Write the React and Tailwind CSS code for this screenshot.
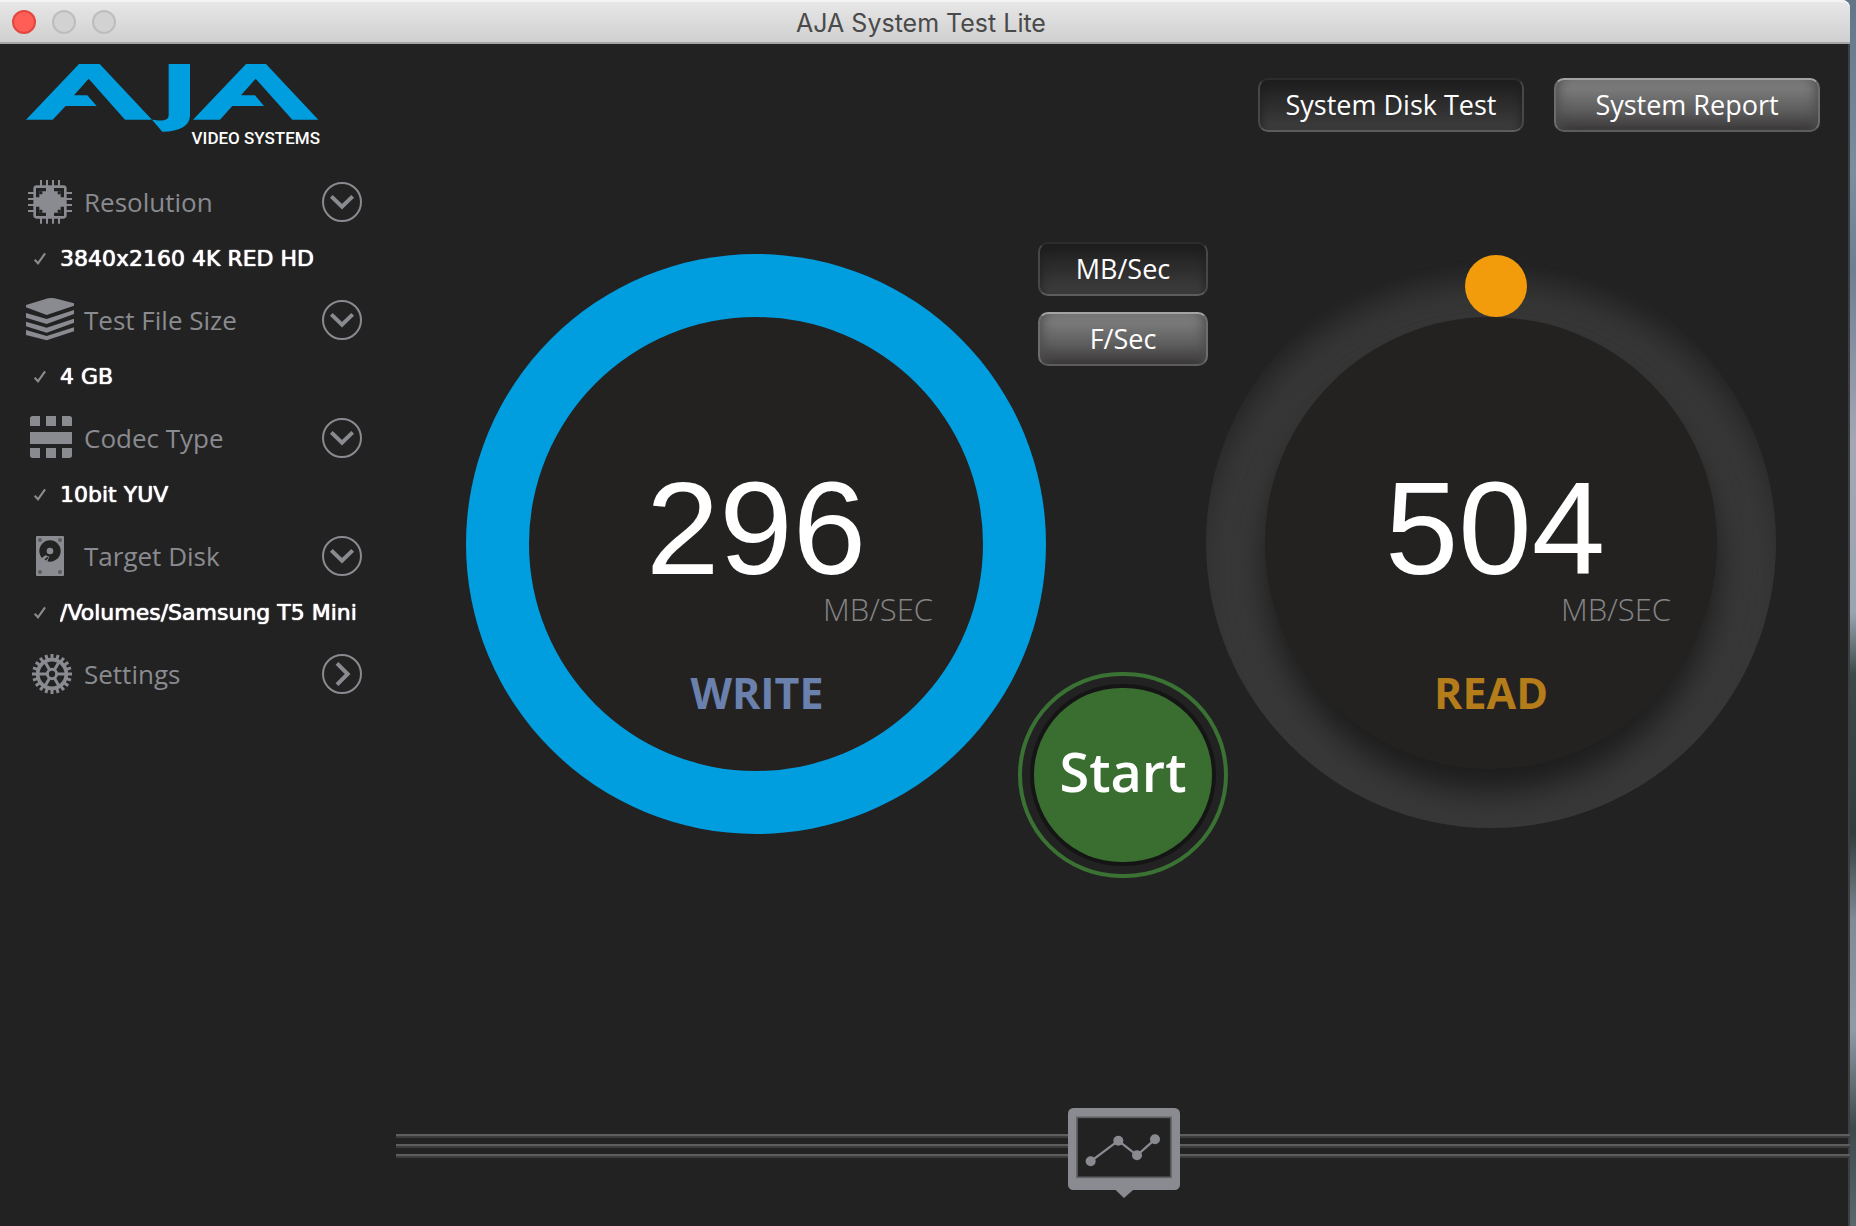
import React from "react";

const GREY = "#8a8b90";

function Logo() {
  return (
    <div className="flex w-[294px] flex-col items-end">
      <svg viewBox="78 192 882 204" className="block h-[68px] w-[294px]" fill="#009ddf" role="img" aria-label="AJA">
        <path d="M78 359 237 192H299L456 359H375L266 236 222 286H262L290 318H197L158 359Z" />
        <path d="M506 192H570V348C568 378 540 395 487 395L456 359C488 364 506 362 506 344Z" />
        <path d="M579 359 738 192H798L955 359H877L767 236 723 286H765L792 318H697L660 359Z" />
      </svg>
      <span className="-mt-1 h-5 font-['Roboto',sans-serif] text-[17px] leading-5 font-medium whitespace-nowrap text-white">
        VIDEO SYSTEMS
      </span>
    </div>
  );
}

function ChipIcon() {
  const pins = [45, 63, 81, 99];
  return (
    <svg viewBox="0 0 144 144" className="size-12 shrink-0" fill="none" stroke={GREY}>
      {pins.map((p) => (
        <path key={p} strokeWidth="6" d={`M${p} 6V24M${p} 120V137M6 ${p}H24M120 ${p}H138`} />
      ))}
      <rect x="22" y="22" width="100" height="100" rx="10" fill={GREY} stroke="none" />
      <g stroke="#222" strokeWidth="10">
        <path d="M60 35H35V58M84 35H109V58M60 109H35V86M84 109H109V86" />
      </g>
      <path d="M40 40H49V49H40ZM95 40H104V49H95ZM40 95H49V104H40ZM95 95H104V104H95Z" fill="#222" stroke="none" />
    </svg>
  );
}

function StackIcon() {
  return (
    <svg viewBox="0 0 144 144" className="size-12 shrink-0" fill={GREY}>
      <path d="M0 27 66 7Q76 5 86 7L144 22V29L62 57 0 34Z" />
      <path d="M0 51 62 69 144 42V54L62 84 0 65Z" />
      <path d="M0 77 62 95 144 68V80L62 110 0 91Z" />
      <path d="M0 102 62 120 144 94V106L62 133 0 117Z" />
    </svg>
  );
}

function CodecIcon() {
  return (
    <svg viewBox="0 0 144 144" className="size-12 shrink-0" fill={GREY}>
      <path d="M20 6H42V36H12V14Q12 6 20 6ZM60 6H90V36H60ZM108 6H130Q138 6 138 14V36H108Z" />
      <path d="M12 54H138V90H12Z" />
      <path d="M12 102H42V132H20Q12 132 12 124ZM60 102H90V132H60ZM108 102H138V124Q138 132 130 132H108Z" />
    </svg>
  );
}

function DiskIcon() {
  return (
    <svg viewBox="0 0 144 144" className="size-12 shrink-0">
      <rect x="30" y="12" width="84" height="120" rx="3" fill={GREY} />
      <circle cx="72" cy="57" r="32" fill="#222" />
      <circle cx="72" cy="57" r="10" fill={GREY} />
      <path d="M40 84 58 70 70 74 60 98H40Z" fill={GREY} />
      <path d="M57 84 66 76" stroke="#222" strokeWidth="5" />
      {[[42, 24], [102, 24], [42, 120], [102, 120]].map(([x, y]) => (
        <circle key={`${x}-${y}`} cx={x} cy={y} r="6" fill="#5b5c60" />
      ))}
    </svg>
  );
}

function GearIcon() {
  const teeth = Array.from({ length: 20 }, (_, i) => i * 18);
  const spokes = Array.from({ length: 6 }, (_, i) => i * 60);
  return (
    <svg viewBox="0 0 144 144" className="size-12 shrink-0" fill="none" stroke={GREY}>
      <g transform="translate(78 72)">
        {teeth.map((a) => (
          <path key={a} d="M0 -45V-60" strokeWidth="9" transform={`rotate(${a})`} />
        ))}
        <circle r="43" strokeWidth="11" />
        {spokes.map((a) => (
          <path key={a} d="M14 0H40" strokeWidth="9" transform={`rotate(${a})`} />
        ))}
        <circle r="14" strokeWidth="9" />
      </g>
    </svg>
  );
}

function CircleArrow({ open }) {
  return (
    <svg viewBox="0 0 120 120" className="size-10 shrink-0" fill="none" stroke={GREY}>
      <circle cx="60" cy="60" r="57" strokeWidth="6" />
      {open ? (
        <path d="M28 43 60 74 92 43" strokeWidth="12" />
      ) : (
        <path d="M45 28 77 60 45 92" strokeWidth="12" />
      )}
    </svg>
  );
}

function Section({ Icon, label, value }) {
  return (
    <li>
      <button type="button" className="flex h-10 w-full items-center gap-2.5">
        <Icon />
        <span className="flex-1 text-left text-[26px] leading-10 whitespace-nowrap text-[#8a8b90]">{label}</span>
        <CircleArrow open={Boolean(value)} />
      </button>
      {value && (
        <p className="mt-[23px] mb-[27px] flex h-7 items-center gap-3.5 pr-1 pl-2">
          <svg viewBox="0 0 39 42" className="h-3.5 w-3 shrink-0" fill="none" stroke="#8c8c8c" strokeWidth="7">
            <path d="M2 23 13 35 36 3" />
          </svg>
          <span className="flex-1 overflow-hidden font-['DejaVu_Sans',sans-serif] text-[22px] leading-7 whitespace-nowrap text-white text-shadow-[0_0_1px_#fff,0_0_1px_#fff]">
            {value}
          </span>
        </p>
      )}
    </li>
  );
}

const SECTIONS = [
  { Icon: ChipIcon, label: "Resolution", value: "3840x2160 4K RED HD" },
  { Icon: StackIcon, label: "Test File Size", value: "4 GB" },
  { Icon: CodecIcon, label: "Codec Type", value: "10bit YUV" },
  { Icon: DiskIcon, label: "Target Disk", value: "/Volumes/Samsung T5 Mini" },
  { Icon: GearIcon, label: "Settings" },
];

const PRESSED =
  "border-[#474747] border-t-[#2c2c2c] border-b-[#5c5c5c] bg-linear-to-b from-[#1e1e1e] via-[#2d2d2d] to-[#3e3e3e] shadow-[inset_0_4px_8px_#1e1e1e]";
const RAISED =
  "border-[#6c6c6c] border-t-[#a3a3a3] border-b-[#5c5c5c] bg-linear-to-b from-[#787878] from-20% via-[#5f5e5f] via-60% to-[#3b393a] shadow-[inset_12px_0_12px_-10px_#4c4b4c,inset_-12px_0_12px_-10px_#4c4b4c]";

function PillButton({ pressed, wide, children }) {
  return (
    <button
      type="button"
      aria-pressed={pressed}
      className={`${wide ? "w-[266px]" : "w-[170px]"} ${pressed ? PRESSED : RAISED} flex h-[54px] items-center justify-center rounded-[10px] border-2 text-[27px] font-medium whitespace-nowrap text-white`}
    >
      {children}
    </button>
  );
}

function Readout({ value, label, valueClass, unitClass, labelClass }) {
  return (
    <>
      <span className={`${valueClass} mt-[152px] font-['Liberation_Sans',sans-serif] text-[132px] leading-[120px] text-white`}>
        {value}
      </span>
      <span className={`${unitClass} self-end text-[31px] leading-10 font-light text-[#858585]`}>MB/SEC</span>
      <span className={`${labelClass} mt-[34px] text-[43px] leading-[60px] font-bold`}>{label}</span>
    </>
  );
}

function WriteDial() {
  return (
    <section aria-label="Write speed" className="flex size-[580px] shrink-0 items-center justify-center rounded-full bg-[#009ddf]">
      <div className="flex size-[454px] flex-col items-center rounded-full bg-[#232221]">
        <Readout value="296" label="WRITE" valueClass="pl-0" unitClass="mr-[50px]" labelClass="pl-0.5 text-[#6a81ae]" />
      </div>
    </section>
  );
}

function ReadDial() {
  return (
    <section aria-label="Read speed" className="relative flex size-[580px] shrink-0 items-center justify-center pb-0.5 pl-0.5">
      <div className="flex size-[570px] items-center justify-center overflow-hidden rounded-full bg-[#383838] shadow-[inset_0_36px_36px_-16px_#1e1e1e]">
        <div className="flex size-[452px] flex-col items-center rounded-full bg-[#232221] shadow-[0_22px_30px_#1d1d1d]">
          <Readout value="504" label="READ" valueClass="pl-2" unitClass="mr-[46px]" labelClass="text-[#b57c1a]" />
        </div>
      </div>
      <span className="absolute top-px left-1/2 -ml-[25px] size-[62px] rounded-full bg-[#f39c0b]" />
    </section>
  );
}

function StartButton() {
  return (
    <button
      type="button"
      className="flex h-[206px] w-[210px] items-center justify-center rounded-full border-4 border-[#3a7233] bg-[#222]"
    >
      <span className="flex h-[174px] w-[178px] items-center justify-center rounded-full bg-[#396e30] pb-2 text-[54px] font-semibold text-white shadow-[0_0_0_4px_#151515]">
        Start
      </span>
    </button>
  );
}

function GraphBar() {
  return (
    <footer className="mt-auto grid grid-cols-1 pb-7">
      <div className="col-start-1 row-start-1 mt-[26px] flex flex-col gap-1.5">
        {[0, 1, 2].map((i) => (
          <div key={i} className="h-1 border-t-2 border-[#5e5e5e] bg-[#3c3c3c]" />
        ))}
      </div>
      <button type="button" aria-label="Show graph" className="z-10 col-start-1 row-start-1 justify-self-center pl-0.5">
        <svg viewBox="0 0 336 270" className="block h-[90px] w-28">
          <rect width="336" height="246" rx="16" fill={GREY} />
          <path d="M142 245H196L168 270Z" fill={GREY} />
          <rect x="27" y="28" width="282" height="180" fill="#222" stroke="#5f6063" strokeWidth="5" />
          <path d="M68 160 151 98 207 142 261 94" fill="none" stroke={GREY} strokeWidth="7" />
          {[[68, 160], [151, 98], [207, 142], [261, 94]].map(([x, y]) => (
            <circle key={x} cx={x} cy={y} r="15" fill={GREY} />
          ))}
        </svg>
      </button>
    </footer>
  );
}

export default function App() {
  return (
    <div className="flex min-h-screen bg-[linear-gradient(#62768a,#7b8ea0_14%,#6d7f93_22%,#a3a7b4_36%,#98a5b0_50%,#3a4a48_55%,#2f3d3e_68%,#7e8b94_75%,#8f9ba5_84%,#3c4a4c_92%,#58686c)] pr-1.5 font-['Open_Sans','Noto_Sans',sans-serif]">
      <div className="flex flex-1 flex-col">
        <header className="flex h-11 items-center gap-4 rounded-tr-lg border-b-2 border-[#a5a5a5] bg-linear-to-b from-[#e8e8e8] to-[#d0d0d0] pr-5 pl-3 shadow-[inset_0_2px_0_#f4f4f4]">
          <div className="flex flex-1 gap-4 pt-0.5">
            <button type="button" aria-label="Close" className="size-6 rounded-full border-2 border-[#e2463f] bg-[#ff5e57]" />
            <button type="button" aria-label="Minimize" className="size-6 rounded-full border-2 border-[#bdbdbd] bg-[#d2d2d2]" />
            <button type="button" aria-label="Zoom" className="size-6 rounded-full border-2 border-[#bdbdbd] bg-[#d2d2d2]" />
          </div>
          <h1 className="pt-1 font-['Inter',sans-serif] text-[25px] leading-8 text-[#4a4a4a]">AJA System Test Lite</h1>
          <div className="flex-1" />
        </header>

        <div className="flex flex-1 bg-[#222] shadow-[inset_-2px_0_0_#3d3f41]">
          <aside className="w-[396px] shrink-0 pt-5 pr-[34px] pl-[26px]">
            <Logo />
            <ul className="mt-[34px]">
              {SECTIONS.map((s) => (
                <Section key={s.label} {...s} />
              ))}
            </ul>
          </aside>

          <main className="flex min-w-0 flex-1 flex-col">
            <nav className="flex justify-end gap-[30px] pt-[34px] pr-[30px]">
              <PillButton wide pressed>System Disk Test</PillButton>
              <PillButton wide>System Report</PillButton>
            </nav>

            <div className="mt-[122px] flex justify-center">
              <WriteDial />
              <div className="z-10 -mx-7 -mt-3 flex shrink-0 flex-col items-center">
                <div role="group" aria-label="Units" className="flex flex-col gap-4">
                  <PillButton pressed>MB/Sec</PillButton>
                  <PillButton>F/Sec</PillButton>
                </div>
                <div className="mt-[306px] -mb-12">
                  <StartButton />
                </div>
              </div>
              <ReadDial />
            </div>

            <GraphBar />
          </main>
        </div>
      </div>
    </div>
  );
}
